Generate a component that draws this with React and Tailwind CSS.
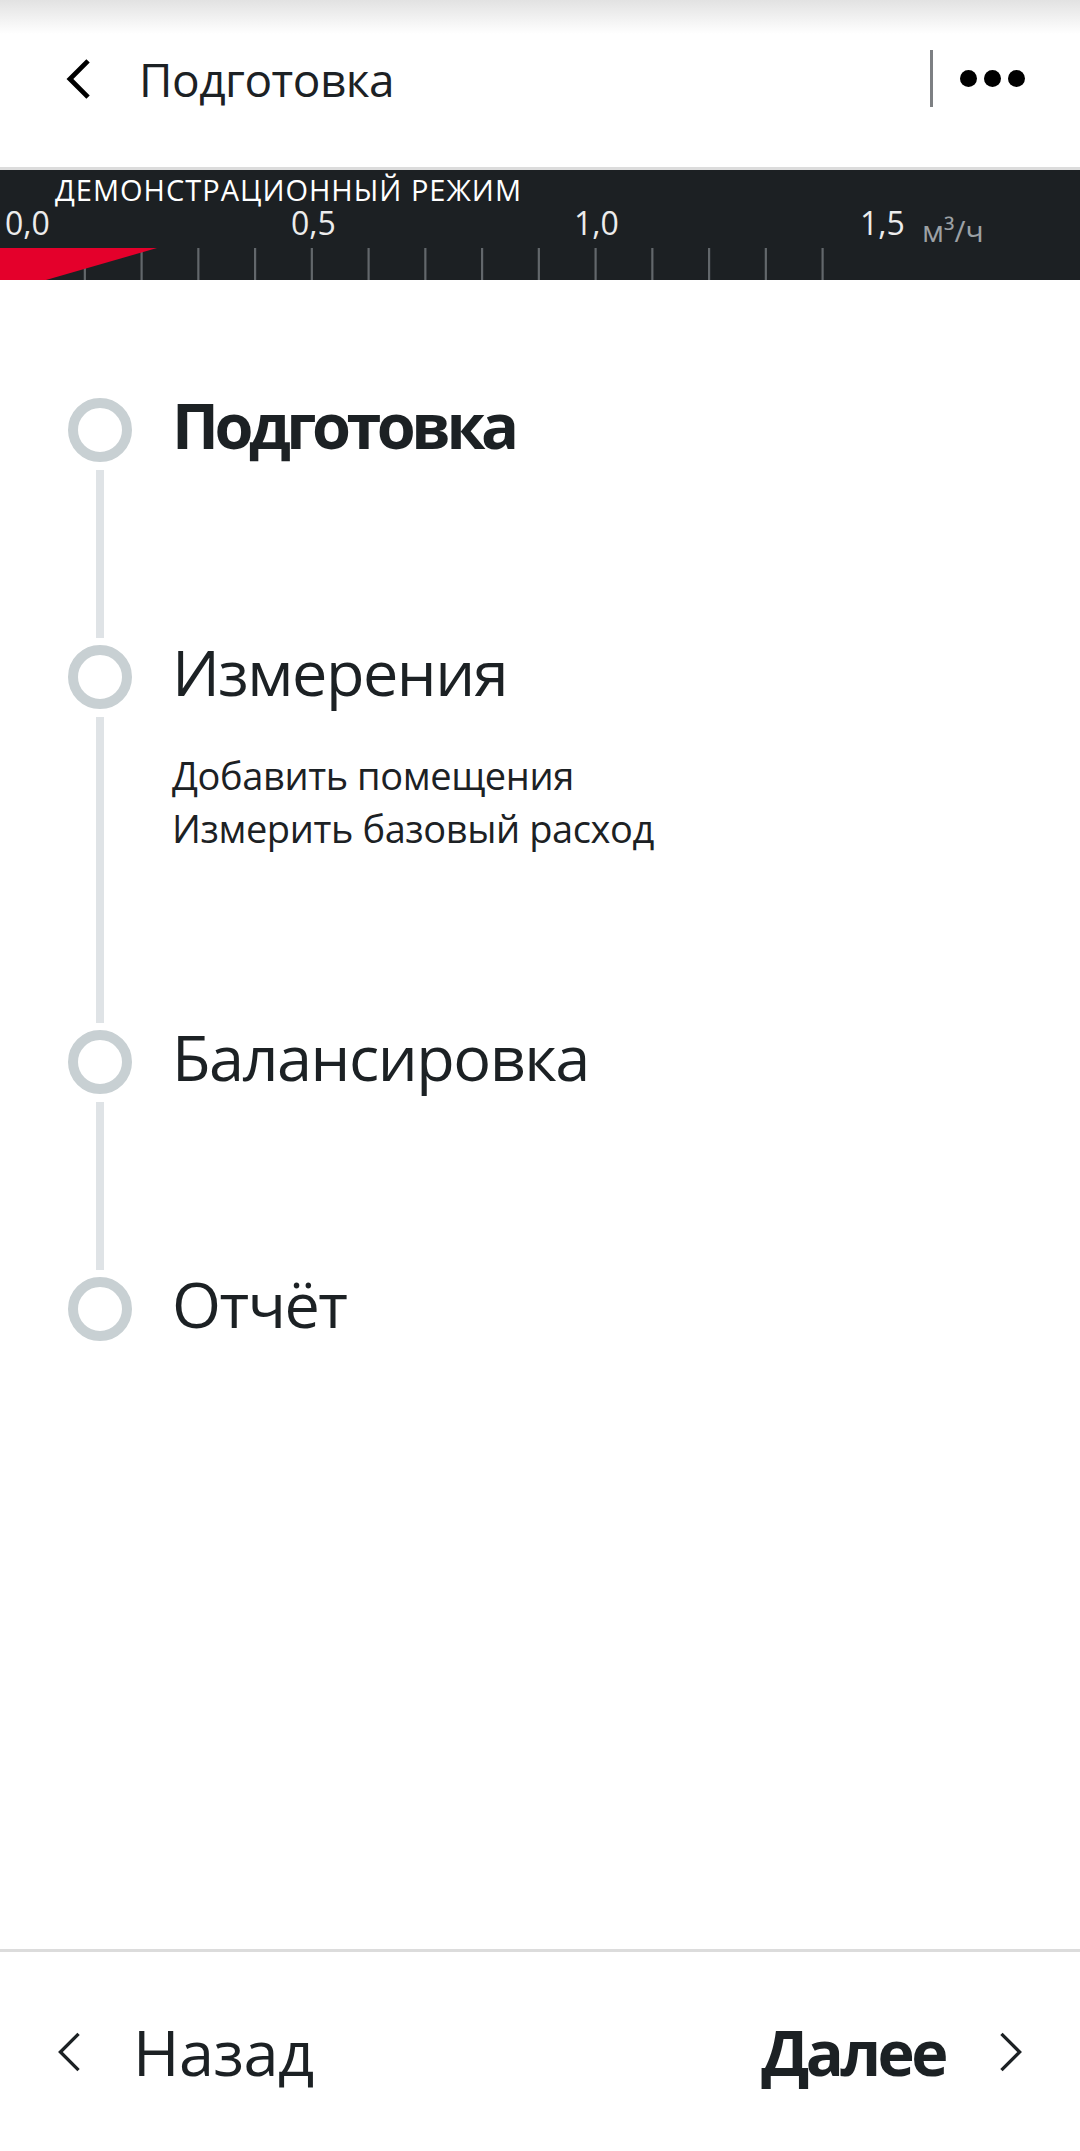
import React from "react";

const steps = [
  { title: "Подготовка", bold: true, sub: [], height: "h-[247px]" },
  {
    title: "Измерения",
    sub: ["Добавить помещения", "Измерить базовый расход"],
    height: "h-[385px]",
  },
  { title: "Балансировка", sub: [], height: "h-[247px]" },
  { title: "Отчёт", sub: [], height: "" },
];

const ticks = Array.from({ length: 14 }, (_, i) => 28 + 56.75 * (i + 1));

const Chevron = ({ dir = "left", className = "", stroke = 4 }) => (
  <svg viewBox="0 0 28 44" className={className} fill="none">
    <polyline
      points={dir === "left" ? "24,3 5,22 24,41" : "4,3 23,22 4,41"}
      stroke="currentColor"
      strokeWidth={stroke}
      strokeLinejoin="miter"
    />
  </svg>
);

const Gauge = () => (
  <div className="relative h-[110px] bg-[#1c2023] text-white overflow-hidden">
    <span className="absolute left-[55px] top-[5px] text-[29px] tracking-[1px] leading-none whitespace-nowrap">
      ДЕМОНСТРАЦИОННЫЙ РЕЖИМ
    </span>
    <span className="absolute left-[5px] top-[37px] text-[32px] leading-none text-[#ececec]">0,0</span>
    <span className="absolute left-[291px] top-[37px] text-[32px] leading-none text-[#ececec]">0,5</span>
    <span className="absolute left-[574px] top-[37px] text-[32px] leading-none text-[#ececec]">1,0</span>
    <span className="absolute left-[860px] top-[37px] text-[32px] leading-none text-[#ececec]">1,5</span>
    <span className="absolute left-[922px] top-[46px] text-[30px] leading-none text-[#9ca1a5]">
      м³/ч
    </span>
    <svg className="absolute left-0 bottom-0" width="1080" height="32" viewBox="0 0 1080 32">
      {ticks.map((x) => (
        <rect key={x} x={x - 1} y="0" width="2.2" height="32" fill="#62676b" />
      ))}
      <polygon points="0,0 157,0 46,32 0,32" fill="#e4002b" />
    </svg>
  </div>
);

export default function App() {
  return (
    <div className="min-h-[2151px] flex flex-col bg-white text-[#1c2124] font-['Open_Sans',sans-serif]">
      <header className="h-[170px] flex items-center pb-[10px] pl-[65px] pr-[55px] border-b-[3px] border-[#dcdcdc] bg-[linear-gradient(to_bottom,#e2e2e2,#ffffff_34px)]">
        <Chevron className="w-[27px] h-[42px] text-black" stroke={5} />
        <span className="ml-[47px] text-[46px] tracking-[-0.5px] leading-none">Подготовка</span>
        <div className="ml-auto w-[3px] h-[57px] bg-[#7d8083]" />
        <div className="ml-[27px] flex gap-[7px]">
          <span className="w-[17px] h-[17px] rounded-full bg-black" />
          <span className="w-[17px] h-[17px] rounded-full bg-black" />
          <span className="w-[17px] h-[17px] rounded-full bg-black" />
        </div>
      </header>

      <Gauge />

      <main className="flex-1 pt-[118px] pl-[68px]">
        {steps.map((s, i) => (
          <div key={s.title} className={`flex ${s.height}`}>
            <div className="w-[64px] flex flex-col items-center">
              <div className="w-[64px] h-[64px] rounded-full border-[10px] border-[#c8d0d3] shrink-0" />
              {i < steps.length - 1 && (
                <div className="flex-1 w-[8px] mt-[8px] mb-[7px] bg-[#dfe3e6]" />
              )}
            </div>
            <div className="ml-[40px]">
              <div
                className={`h-[64px] flex items-center pb-[12px] text-[63px] leading-none whitespace-nowrap ${
                  s.bold ? "font-bold tracking-[-4.5px]" : "font-normal tracking-[-1.5px]"
                }`}
              >
                {s.title}
              </div>
              {s.sub.length > 0 && (
                <div className="mt-[40px] text-[38px] tracking-[-0.4px] leading-[53px]">
                  {s.sub.map((t) => (
                    <div key={t}>{t}</div>
                  ))}
                </div>
              )}
            </div>
          </div>
        ))}
      </main>

      <footer className="h-[202px] border-t-[3px] border-[#dcdcdc] flex items-center pl-[55px] pr-[55px]">
        <Chevron className="w-[28px] h-[42px] text-[#1c2124]" stroke={3.5} />
        <span className="ml-[50px] text-[63px] tracking-[-0.5px] leading-none">Назад</span>
        <span className="ml-auto text-[63px] tracking-[-3.5px] leading-none font-bold">Далее</span>
        <Chevron dir="right" className="ml-[52px] w-[28px] h-[42px] text-[#1c2124]" stroke={3.5} />
      </footer>
    </div>
  );
}
